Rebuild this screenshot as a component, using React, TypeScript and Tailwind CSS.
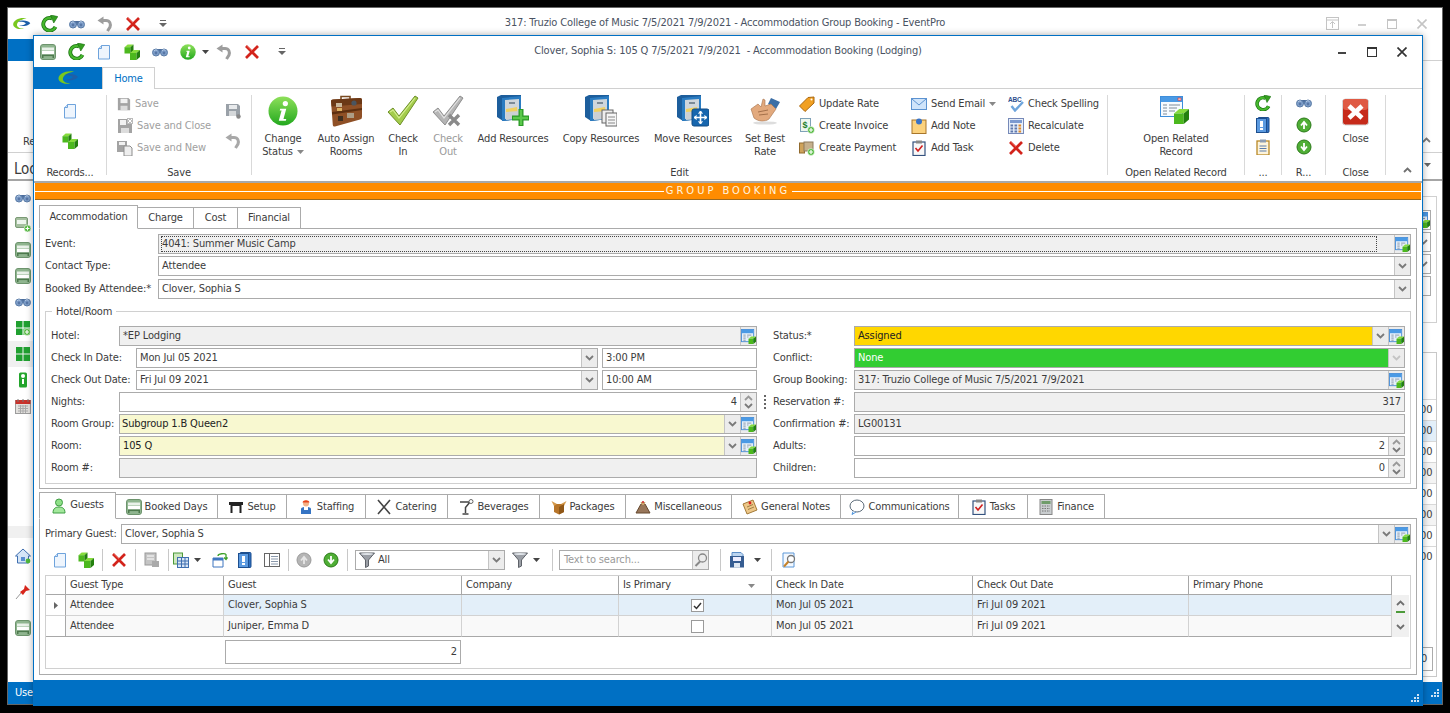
import React from "react";

type P = { s?: number; className?: string };
const Svg = ({ s = 16, v = 16, children, className }: { s?: number; v?: number; children: React.ReactNode; className?: string }) => (
  <svg width={s} height={s} viewBox={`0 0 ${v} ${v}`} className={`shrink-0 ${className ?? ""}`}>{children}</svg>
);

const Cube = ({ x, y, w, gray }: { x: number; y: number; w: number; gray?: boolean }) => (
  <g>
    <polygon points={`${x},${y + w * 0.3} ${x + w * 0.35},${y} ${x + w},${y} ${x + w * 0.65},${y + w * 0.3}`} fill={gray ? "#ccc" : "#86dc3c"} />
    <rect x={x} y={y + w * 0.3} width={w * 0.65} height={w * 0.7} fill={gray ? "#aaa" : "#4cb81e"} />
    <polygon points={`${x + w * 0.65},${y + w * 0.3} ${x + w},${y} ${x + w},${y + w * 0.7} ${x + w * 0.65},${y + w}`} fill={gray ? "#888" : "#23800e"} />
  </g>
);
const Cubes = ({ s = 16 }: P) => <Svg s={s}><Cube x={0.5} y={0.5} w={9} /><Cube x={6} y={6} w={10} /></Svg>;
const Doc = ({ s = 16 }: P) => <Svg s={s}><path d="M5.5 1.5H13.5V15H2.5V4.5Z" fill="#eef5fd" stroke="#6ea3dc" /><path d="M5.5 1.5V4.5H2.5" fill="#cfe2f7" stroke="#6ea3dc" /></Svg>;
const Refresh = ({ s = 17 }: P) => (
  <Svg s={s}>
    <path d="M13.6 11.2A6 6 0 1 1 10.5 3.2" fill="none" stroke="#17700f" strokeWidth="3.6" />
    <path d="M13.6 11.2A6 6 0 1 1 10.5 3.2" fill="none" stroke="#47b82e" strokeWidth="2.2" />
    <polygon points="9,0 15.8,1.5 12,7.5" fill="#35a020" stroke="#17700f" strokeWidth=".6" />
  </Svg>
);
const Binoc = ({ s = 16 }: P) => (
  <Svg s={s}>
    <rect x="5.5" y="5" width="5" height="4" fill="#4a6c9c" />
    <circle cx="4" cy="8.5" r="3.5" fill="#7f9fca" stroke="#5a7ba6" />
    <circle cx="12" cy="8.5" r="3.5" fill="#7f9fca" stroke="#5a7ba6" />
    <circle cx="4" cy="9" r="1.4" fill="#5877a6" />
    <circle cx="12" cy="9" r="1.4" fill="#5877a6" />
    <path d="M2 6.8A2.5 2.5 0 0 1 5 6.2M10 6.8A2.5 2.5 0 0 1 13.5 6.2" fill="none" stroke="#c2d3ea" strokeWidth=".8" />
  </Svg>
);
const Undo = ({ s = 16, c = "#9d9d9d" }: P & { c?: string }) => (
  <Svg s={s}>
    <path d="M5 4.5H9C13 4.5 14 8 13 11L10.5 15" fill="none" stroke={c} strokeWidth="3" />
    <polygon points="6.5,0.5 0.5,4.5 6.5,8.5" fill={c} />
  </Svg>
);
const RedX = ({ s = 16 }: P) => (
  <Svg s={s}>
    <path d="M2 2L14 14M14 2L2 14" stroke="#d3231b" strokeWidth="2.7" />
    <path d="M2.5 1.8L8 7" stroke="#f0665c" strokeWidth=".8" />
  </Svg>
);
const Caret = ({ c = "#444" }: { c?: string }) => <svg width="7" height="4" viewBox="0 0 7 4" className="shrink-0"><polygon points="0,0 7,0 3.5,4" fill={c} /></svg>;
const More = () => <svg width="8" height="7" viewBox="0 0 8 7" className="shrink-0"><rect x="1" width="6" height="1" fill="#666" /><polygon points="0,3 8,3 4,7" fill="#666" /></svg>;
const Chev = ({ c = "#7a7a7a", up }: { c?: string; up?: boolean }) => (
  <svg width="9" height="6" viewBox="0 0 9 6" className="shrink-0"><path d={up ? "M1 5L4.5 1.5L8 5" : "M1 1L4.5 4.5L8 1"} fill="none" stroke={c} strokeWidth="1.8" /></svg>
);
const Bed = ({ s = 16 }: P) => (
  <Svg s={s}>
    <rect x=".5" y=".5" width="15" height="15" rx="2.5" fill="#8fb58f" stroke="#6d946d" />
    <rect x="2" y="3.5" width="12" height="3" fill="#e9f1e9" />
    <rect x="2" y="7" width="12" height="3.5" fill="#fff" />
    <rect x="2" y="10.5" width="12" height="1.6" fill="#4d7a4d" />
    <rect x="2" y="12" width="1.5" height="2" fill="#4d7a4d" />
    <rect x="12.5" y="12" width="1.5" height="2" fill="#4d7a4d" />
  </Svg>
);
const Info = ({ s = 16 }: P) => (
  <svg width={s} height={s} viewBox="0 0 32 32" className="shrink-0">
    <defs><linearGradient id="ig" x1="0" y1="0" x2="0" y2="1"><stop offset="0" stopColor="#8ee05a" /><stop offset="1" stopColor="#22a81e" /></linearGradient></defs>
    <circle cx="16" cy="16" r="15.5" fill="url(#ig)" />
    <circle cx="18.5" cy="8" r="2.8" fill="#fff" />
    <path d="M13 13.5H19.5L16.5 24.5H19.5L19 26.5H11.5L14.5 15.5H12.5Z" fill="#fff" />
  </svg>
);
const Rec = ({ s = 16 }: P) => (
  <Svg s={s}>
    <rect x=".5" y=".5" width="13" height="13" fill="#e4effb" stroke="#4a90d9" />
    <rect x="1" y="1" width="12" height="3.5" fill="#4a9ae5" />
    <path d="M2.5 6.5H5M6.5 6.5H11M2.5 8.5H5M6.5 8.5H8M2.5 10.5H5M2.5 12.5H5" stroke="#8c99a8" />
    <Cube x={8} y={8} w={8} />
  </Svg>
);
const Floppy = ({ s = 16, c = "#a3a3a3" }: P & { c?: string }) => (
  <Svg s={s}>
    <path d="M1 1H13L15 3V15H1Z" fill={c} />
    <rect x="4" y="2" width="8" height="5" fill="#f1f1f1" />
    <rect x="4" y="10" width="8" height="5" fill="#dcdcdc" />
  </Svg>
);
const SaveClose = () => (
  <Svg>
    <path d="M1 1H15V15H1Z" fill="#a3a3a3" />
    <rect x="3" y="2" width="6" height="5" fill="#f1f1f1" />
    <rect x="4" y="10" width="8" height="5" fill="#dcdcdc" />
    <rect x="10" y="0" width="6" height="6" fill="#bbb" />
    <path d="M11 1L15 5M15 1L11 5" stroke="#fff" />
  </Svg>
);
const SaveNew = () => (
  <Svg>
    <path d="M0 1H10V12H0Z" fill="#a3a3a3" />
    <rect x="2" y="2" width="6" height="3" fill="#f1f1f1" />
    <path d="M7 6H13L15 8V16H7Z" fill="#eee" stroke="#8d8d8d" />
  </Svg>
);
const SaveAlt = () => (
  <Svg>
    <path d="M1 1H13L15 3V13H1Z" fill="#9aa1a8" />
    <rect x="4" y="2" width="8" height="4" fill="#e8eaec" />
    <rect x="4" y="8" width="7" height="5" fill="#d5d8da" />
    <circle cx="13.5" cy="13.5" r="2.2" fill="#888" />
  </Svg>
);
const Tag = () => <Svg><polygon points="0.5,10 9,1.5 15,1 15,7 6,15.5" fill="#f1a022" stroke="#a9670f" /><circle cx="12.5" cy="3.5" r="1" fill="#fff" /></Svg>;
const GreenPlus = ({ x = 9, y = 9 }: { x?: number; y?: number }) => (
  <g>
    <circle cx={x + 3} cy={y + 3} r="3.4" fill="#4fb83a" stroke="#fff" strokeWidth=".6" />
    <path d={`M${x + 1} ${y + 3}H${x + 5}M${x + 3} ${y + 1}V${y + 5}`} stroke="#fff" strokeWidth="1.2" />
  </g>
);
const Invoice = () => <Svg><rect x="1.5" y="0.5" width="10" height="13" fill="#eef7ee" stroke="#7fa2b8" /><text x="3.5" y="10" fontSize="9" fontWeight="700" fill="#1e7d2a" fontFamily="Liberation Sans">$</text><GreenPlus /></Svg>;
const Payment = () => <Svg><rect x="0.5" y="3" width="5" height="10" fill="#cfa35b" stroke="#916a2d" /><rect x="5" y="2" width="9" height="9" fill="#c6b08c" stroke="#8d7a5c" /><GreenPlus /></Svg>;
const Mail = () => <Svg><rect x=".5" y="2.5" width="15" height="11" fill="#cfe4fa" stroke="#5c93d1" /><path d="M1 3L8 9L15 3" fill="none" stroke="#5c93d1" /></Svg>;
const Note = () => <Svg><rect x="1" y="2" width="14" height="13.5" fill="#fbd27e" stroke="#a8762a" /><circle cx="8" cy="3.5" r="3" fill="#3973c6" /></Svg>;
const Clip = () => <Svg><rect x="2" y="2" width="12" height="13.5" fill="#f8f8f8" stroke="#34527f" strokeWidth="1.2" /><rect x="5" y="0.5" width="6" height="3" fill="#888" /><path d="M4.5 8L7 11L11.5 5.5" fill="none" stroke="#d11f1f" strokeWidth="1.6" /></Svg>;
const Spell = () => (
  <Svg>
    <text x="0" y="6" fontSize="6.5" fontWeight="700" fill="#2d4f8e" fontFamily="Liberation Sans">ABC</text>
    <path d="M3.5 10L7 14.5L15 6" fill="none" stroke="#6ea5dc" strokeWidth="2.4" />
  </Svg>
);
const Calc = () => (
  <Svg>
    <rect x=".5" y=".5" width="15" height="15" fill="#e7effa" stroke="#7689b8" />
    <rect x="2" y="2" width="12" height="3" fill="#7c9ad0" />
    {[7, 10, 13].map((y) => [2.5, 6.5, 10.5].map((x) => <rect key={`${x}${y}`} x={x} y={y - 0.5} width="2.6" height="2" fill={x > 10 ? "#e08a2a" : "#5f78ac"} />))}
  </Svg>
);
const Book = ({ s = 16 }: P) => (
  <Svg s={s}>
    <rect x="3" y=".5" width="11" height="15" rx="1" fill="#2d6fc0" stroke="#1d4f8f" />
    <rect x="1.5" y="1.5" width="10" height="14" fill="#5b9ae0" stroke="#1d4f8f" />
    <rect x="5" y="4" width="3" height="6" fill="#fff" />
    <rect x="5" y="11" width="3" height="2" fill="#fff" />
  </Svg>
);
const Clipboard = () => (
  <Svg>
    <rect x="2" y="2" width="12" height="14" fill="#fdf4dc" stroke="#b98925" strokeWidth="1.3" />
    <rect x="5" y="0.5" width="6" height="3" fill="#8e9db1" />
    <path d="M4.5 7H11.5M4.5 9.5H11.5M4.5 12H11.5" stroke="#5b7dad" />
  </Svg>
);
const Arrow = ({ up, gray }: { up?: boolean; gray?: boolean }) => (
  <Svg>
    <circle cx="8" cy="8" r="7" fill={gray ? "#b5b5b5" : "#4fae35"} stroke={gray ? "#9a9a9a" : "#2a7a18"} />
    <path d={up ? "M8 12V6.5M5 8.5L8 5L11 8.5" : "M8 4V9.5M5 7.5L8 11L11 7.5"} fill="none" stroke={gray ? "#e6e6e6" : "#fff"} strokeWidth="1.8" />
  </Svg>
);
const Funnel = () => (
  <Svg>
    <path d="M.5 1H15.5L9.5 8V14L6.5 15.5V8Z" fill="#9b9fa6" stroke="#5e6269" />
    <ellipse cx="8" cy="2" rx="6" ry="1" fill="#dfe3e8" />
  </Svg>
);
const Mag = ({ c = "#888" }: { c?: string }) => <Svg><circle cx="9.5" cy="6" r="4" fill="none" stroke={c} strokeWidth="1.3" /><path d="M7 9.5L2.5 14" stroke={c} strokeWidth="2" /></Svg>;

/* ---- 32px icons ---- */
const Suitcase = () => (
  <Svg s={32} v={32}>
    <path d="M11 5V1.5H20V5" fill="none" stroke="#7a4a20" strokeWidth="1.6" />
    <path d="M1 6Q1 4.5 3 4.5L30 3Q32 3 32 5V22Q32 24 30 24.5L5 31.5Q3 32 2.8 30Z" fill="#8f5026" />
    <path d="M1 6Q1 4.5 3 4.5L30 3Q32 3 32 5V9L1.6 11.5Z" fill="#6b3816" />
    <path d="M2 17L32 13V15L2.2 19.5Z" fill="#5d2f10" />
    <rect x="6" y="8" width="6" height="4" fill="#c9b79b" />
    <rect x="17" y="18" width="7" height="5" fill="#ad9d86" />
    <circle cx="24" cy="8" r="2.6" fill="#4a5560" />
    <rect x="8" y="21" width="5" height="5" fill="#3f2f20" />
    <rect x="7" y="13" width="5" height="3" fill="#dcb062" />
  </Svg>
);
const Check = ({ gray }: { gray?: boolean }) => (
  <Svg s={32} v={32}>
    <path d="M1 17L6 13L12 21L28 1L31 3L13 30Z" fill={gray ? "#b5b5b5" : "#a4cc4c"} stroke={gray ? "#8e8e8e" : "#6d8f28"} />
    <path d="M3 17L6 15L12 23L28 3" fill="none" stroke={gray ? "#e2e2e2" : "#d5ee90"} strokeWidth="1.2" />
    {gray && <path d="M17 20L27 30M27 20L17 30" stroke="#8a8a8a" strokeWidth="3.4" />}
  </Svg>
);
const Cabinet = ({ kind }: { kind: "add" | "copy" | "move" }) => (
  <Svg s={32} v={32}>
    <polygon points="0,2 4,0 24,0 24,24 6,26 0,22" fill="#1d5e9c" />
    <polygon points="5,3 24,1 24,24 5,26" fill="#2a7cc2" />
    <polygon points="8,5 22,4 22,22 8,24" fill="#cfd6dc" />
    <rect x="12" y="7" width="6" height="2" fill="#7c8a96" />
    <polygon points="9,14 20,12 21,22 9,24" fill="#f0d060" />
    <polygon points="9,17 22,16 22,24 9,25" fill="#ccd0d4" />
    {kind === "add" && <path d="M24 14V31M15 23H32" stroke="#2b9a26" strokeWidth="5" />}
    {kind === "add" && <path d="M24 15V30M16 23H31" stroke="#5ac84a" strokeWidth="2.4" />}
    {kind === "copy" && <g><rect x="17" y="15" width="11" height="13" fill="#eee" stroke="#666" /><rect x="21" y="18" width="11" height="13" fill="#f6f6f6" stroke="#666" /><path d="M23 22H30M23 25H30M23 28H30" stroke="#888" /></g>}
    {kind === "move" && <g><rect x="15" y="14" width="17" height="17" rx="2" fill="#1766ae" stroke="#0f4b85" /><path d="M23.5 16.5V28.5M17.5 22.5H29.5" stroke="#fff" strokeWidth="1.6" /><path d="M21.5 18.5L23.5 16L25.5 18.5M21.5 26.5L23.5 29L25.5 26.5M19.5 20.5L17 22.5L19.5 24.5M27.5 20.5L30 22.5L27.5 24.5" fill="#fff" stroke="#fff" /></g>}
  </Svg>
);
const Hand = () => (
  <Svg s={32} v={32}>
    <path d="M22 3L31 7L27 14L19 9Z" fill="#3b6ea5" />
    <path d="M2 14L9 9L12 12L14 4L16 5V11L22 9L27 14L20 24C16 27 10 27 5 23Z" fill="#e2a97d" stroke="#a4704a" strokeWidth=".6" />
    <path d="M9 17L19 15M10 20L19 19" stroke="#a4704a" />
    <ellipse cx="16" cy="28" rx="12" ry="1.6" fill="#ddd" />
  </Svg>
);
const OpenRec = () => (
  <Svg s={32} v={32}>
    <rect x=".5" y="1.5" width="22" height="20" fill="#f7fbff" stroke="#3e8edb" />
    <rect x="1" y="2" width="21" height="5" fill="#4a9ae5" />
    <rect x="18" y="3" width="3" height="2.5" fill="#f3c0c0" stroke="#d22" strokeWidth=".5" />
    <path d="M3 10H7M9 10H20M3 13H7M9 13H17M3 16H7M9 16H15M3 19H7" stroke="#7e8b99" />
    <Cube x={14} y={14} w={15} />
  </Svg>
);
const CloseBig = () => (
  <Svg s={32} v={32}>
    <rect x="2.5" y="4" width="26" height="26" rx="3" fill="#c62a1a" stroke="#d6d6d6" />
    <rect x="3" y="4" width="25" height="11" rx="3" fill="#df5a44" />
    <path d="M9 11L22 23M22 11L9 23" stroke="#fff" strokeWidth="4.5" />
  </Svg>
);
const Logo = ({ s = 16 }: P) => (
  <svg width={s * 1.5} height={s} viewBox="0 0 24 16" className="shrink-0">
    <path d="M18 1.5C10 0 3 3.5 2.5 8C2 12 9 15.5 15 13C10 14 6 11 7 8C8 4.5 13 2.5 18 1.5Z" fill="#78c81e" />
    <path d="M8 5.5C12 3 20 4 22 7C20 10 14 11 9 10C13 9.5 16 8.5 17 7C15 5.5 11 5 8 5.5Z" fill="#1e5fa8" />
  </svg>
);

/* tab icons */
const TGuest = () => <Svg><circle cx="8" cy="4.5" r="3.5" fill="#8fe088" stroke="#3f9e44" /><path d="M2 15C2 10 5 9 8 9S14 10 14 15Z" fill="#a3e89c" stroke="#3f9e44" /></Svg>;
const TSetup = () => <Svg><path d="M1 3H15V6H13.5V14H11.5V7H4.5V14H2.5V6H1Z" fill="#222" /></Svg>;
const TStaff = () => <Svg><circle cx="8" cy="4.5" r="3" fill="#f2b38a" /><path d="M4.5 3.5C5 .5 11 .5 11.5 3.5Z" fill="#e5451d" /><path d="M3 15V10C3 8.5 5 8 8 8S13 8.5 13 10V15Z" fill="#3574c4" /><rect x="6" y="8" width="4" height="3" fill="#fff" /></Svg>;
const TCater = () => <Svg><path d="M2 1L14 15M14 1L2 15" stroke="#444" strokeWidth="1.6" /></Svg>;
const TBev = () => <Svg><path d="M2 3H12L7.5 8.5V14M4.5 15H10.5" fill="none" stroke="#444" strokeWidth="1.5" /><circle cx="13" cy="2.5" r="2" fill="#fff" stroke="#666" /></Svg>;
const TPack = () => <Svg><polygon points="3,5 13,5 13,13 8,15.5 3,13" fill="#b7752a" /><polygon points="0.5,2 6,5 3,7" fill="#d59a4c" /><polygon points="15.5,2 10,5 13,7" fill="#d59a4c" /><polygon points="8,8 13,5 13,13 8,15.5" fill="#8f5718" /></Svg>;
const TMisc = () => <Svg><path d="M6 5H10L15 14H1Z" fill="#98765a" stroke="#65482f" /><path d="M5.5 3H10.5L9 6H7Z" fill="#c9a06a" /><circle cx="8" cy="3" r="1.1" fill="#c33" /></Svg>;
const TNotes = () => <Svg><polygon points="1,5 11,1 15,11 5,15" fill="#edc788" stroke="#a37a38" /><path d="M5 8L11 5.5M6 10.5L12 8" stroke="#9f7e45" /><circle cx="8" cy="4" r="1.4" fill="#d22" /></Svg>;
const TComm = () => <Svg><ellipse cx="8" cy="7" rx="7" ry="6" fill="#fff" stroke="#5b6a78" /><path d="M4 12.5L3 15.5L7 13" fill="#fff" stroke="#4a90d9" /></Svg>;
const TFin = () => <Svg><rect x="2" y="0.5" width="12" height="15" fill="#c9cdcf" stroke="#888" /><rect x="3.5" y="2" width="9" height="3" fill="#6f9c6a" /><path d="M4 7H12M4 9.5H12M4 12H12" stroke="#777" strokeDasharray="1.5 1" /></Svg>;
const TGrid = () => <Svg><rect x=".5" y="1" width="9" height="11" fill="#cfe8c0" stroke="#4d9a3a" /><rect x="4.5" y="5.5" width="11" height="10" fill="#d9e6f6" stroke="#3f6fb0" /><path d="M5 9H15M5 12H15M8.5 6V15M12 6V15" stroke="#3f6fb0" /></Svg>;
const TDis = () => <Svg><rect x="1" y="1" width="11" height="12" fill="#c4c4c4" stroke="#999" /><path d="M3 4H10M3 7H10" stroke="#fff" /><rect x="8" y="9" width="7" height="6" fill="#aaa" /></Svg>;
const TOpen = () => <Svg><path d="M1 6H11V15H1Z" fill="#fff" stroke="#3f77c0" /><rect x="1" y="6" width="10" height="2.5" fill="#3f77c0" /><path d="M6 4C6 1.5 13 1 14 2.5V7M12 5.5L14 7.5L15.5 5.5" fill="none" stroke="#3da12a" strokeWidth="1.3" /></Svg>;
const TPanel = () => <Svg><rect x=".5" y="1.5" width="15" height="13" fill="#fff" stroke="#666" /><path d="M5.5 2V14" stroke="#666" /><path d="M7 4.5H14M7 7H14M7 9.5H14M7 12H14" stroke="#8a99ac" /></Svg>;
const TSave = () => <Svg><path d="M3 0.5H12L14 2.5V6H3Z" fill="#bcd5f0" stroke="#5c8ec8" /><path d="M1 4H15V15.5H1Z" fill="#365d92" /><rect x="4" y="5" width="8" height="4" fill="#eef" /><rect x="5" y="11" width="6" height="4.5" fill="#dfe8f2" /></Svg>;
const TMag = () => <Svg><path d="M2 1H13V15H2Z" fill="#f4f9ff" stroke="#5c98d8" /><circle cx="10" cy="7" r="3.5" fill="#fff" stroke="#777" strokeWidth="1.3" /><path d="M7.5 9.5L3 14.5" stroke="#c6822a" strokeWidth="2" /></Svg>;
const PinH = () => <Svg><path d="M10 1L15 6L11 7L8 11L5 8L9 5Z" fill="#d8261c" /><path d="M6 9L1 15" stroke="#999" /></Svg>;
const House = () => <Svg><path d="M8 1L15.5 8H13.5V15H2.5V8H.5Z" fill="#d6e6f7" stroke="#3f6fb0" /><rect x="6" y="9" width="4" height="4" fill="#5b8fd0" /><circle cx="13" cy="13" r="2.4" fill="#4fb83a" /></Svg>;
const GridG = ({ plus }: { plus?: boolean }) => <Svg><rect x="1" y="1" width="6.5" height="6.5" fill="#20a030" /><rect x="8.5" y="1" width="6.5" height="6.5" fill="#20a030" /><rect x="1" y="8.5" width="6.5" height="6.5" fill="#20a030" /><rect x="8.5" y="8.5" width="6.5" height="6.5" fill="#20a030" />{plus && <GreenPlus />}</Svg>;
const Traffic = () => <Svg><rect x="4" y="0.5" width="8" height="15" rx="1.5" fill="#23a52c" /><circle cx="8" cy="4" r="2" fill="#fff" /><path d="M8 7V12" stroke="#fff" strokeWidth="2" /></Svg>;
const CalIcon = () => <Svg><rect x=".5" y="2.5" width="15" height="13" fill="#e3e1de" stroke="#9c9c9c" /><rect x=".5" y="2" width="15" height="4" fill="#c9322b" /><path d="M3 1V4M8 1V4M13 1V4" stroke="#777" /><path d="M3 8H13M3 10.5H13M3 13H13M5.5 7V15M8 7V15M10.5 7V15" stroke="#a9a9a9" /></Svg>;
const BedAdd = () => <Svg><rect x=".5" y="1.5" width="12" height="10" rx="1.5" fill="#a5bf9f" stroke="#7a9a75" /><rect x="2" y="4" width="9" height="4" fill="#eef5ee" /><GreenPlus x={9.5} y={9.5} /></Svg>;

/* ---- primitives ---- */
const Box = ({ w, children }: { w: number; children: React.ReactNode }) => (
  <div style={{ width: w }} className="flex shrink-0 items-center justify-center gap-[5px]">{children}</div>
);
const VSep = () => <div className="mx-0 h-[22px] w-px shrink-0 bg-[#c8c8c8]" />;
const RSep = () => <div className="my-[6px] w-px shrink-0 bg-[#d9d9d9]" />;

const Group = ({ w, label, children, className }: { w: number; label: string; children: React.ReactNode; className?: string }) => (
  <div style={{ width: w }} className="flex shrink-0 flex-col">
    <div className={`flex min-h-0 flex-1 ${className ?? ""}`}>{children}</div>
    <div className="mb-px h-[14px] text-center leading-[14px] whitespace-nowrap">{label}</div>
  </div>
);
const Large = ({ w, icon, l1, l2, caret, off }: { w: number; icon: React.ReactNode; l1: string; l2?: string; caret?: boolean; off?: boolean }) => (
  <div style={{ width: w }} className={`flex shrink-0 flex-col items-center pt-[6px] ${off ? "text-[#9a9a9a]" : ""}`}>
    <div className="flex h-[32px] w-[32px] items-center justify-center">{icon}</div>
    <div className="mt-[5px] text-center leading-[13px] whitespace-nowrap">{l1}</div>
    {l2 && <div className="flex items-center gap-[4px] text-center leading-[13px] whitespace-nowrap">{l2}{caret && <Caret c="#888" />}</div>}
  </div>
);
const Small = ({ icon, text, off, caret }: { icon: React.ReactNode; text: string; off?: boolean; caret?: boolean }) => (
  <div className={`flex h-[22px] items-center gap-[4px] whitespace-nowrap ${off ? "text-[#a0a0a0]" : ""}`}>
    {icon}<span className="pt-px">{text}</span>{caret && <Caret c="#888" />}
  </div>
);
const SmallCol = ({ items, className }: { items: React.ReactNode; className?: string }) => <div className={`flex flex-col pt-[4px] ${className ?? ""}`}>{items}</div>;

type Btn = "chev" | "rec" | "spin" | "chevOff";
const Field = ({ children, bg = "bg-white", btn = [], right, pl = "pl-[3px]", focus, fg, w }: { children?: React.ReactNode; bg?: string; btn?: Btn[]; right?: boolean; pl?: string; focus?: boolean; fg?: string; w?: string }) => (
  <div className={`flex h-[20px] ${w ?? "min-w-0 flex-1"} border border-[#ababab] bg-white`}>
    <div className={`flex min-w-0 flex-1 items-center ${bg} ${fg ?? ""} ${right ? "justify-end pr-[3px]" : pl} whitespace-nowrap`}>
      {focus ? <div className="mr-[17px] flex h-[16px] w-[1216px] items-center border border-dotted border-[#444] pt-px">{children}</div> : <span className="pt-px">{children}</span>}
    </div>
    {btn.map((b, i) => (
      <div key={i} className="flex w-[16px] shrink-0 flex-col items-center justify-center border-l border-[#c4c4c4] bg-[#ececec]">
        {b === "chev" && <Chev />}
        {b === "chevOff" && <Chev c="#c4c4c4" />}
        {b === "rec" && <Rec s={15} />}
        {b === "spin" && <div className="flex flex-col items-center gap-[2px]"><Chev up c="#999" /><Chev /></div>}
      </div>
    ))}
  </div>
);
const Row = ({ label, lw, children }: { label: string; lw: number; children: React.ReactNode }) => (
  <div className="flex h-[20px] items-center">
    <div style={{ width: lw }} className="shrink-0 pt-px whitespace-nowrap">{label}</div>
    {children}
  </div>
);
const TabS = ({ w, active, icon, h, nudge, children }: { w: number; active?: boolean; icon?: React.ReactNode; h: number; nudge?: boolean; children: React.ReactNode }) => (
  <div style={{ width: w, height: active ? h + 2 : h }} className={`-ml-px flex shrink-0 items-center justify-center gap-[3px] border border-[#ababab] bg-white whitespace-nowrap first:ml-0 ${active ? "relative z-10 border-b-white" : ""}`}>
    {icon}<span className={nudge ? "pt-px" : ""}>{children}</span>
  </div>
);

const topL = ["Event:", "Contact Type:", "Booked By Attendee:*"];
const cols = "grid-cols-[20px_158px_238px_157px_153px_201px_216px_203px_17px]";
const Cell = ({ children, bg, className }: { children?: React.ReactNode; bg: string; className?: string }) => (
  <div className={`flex h-[21px] items-center border-r border-b border-[#d2d2d2] pt-px pl-[4px] whitespace-nowrap ${bg} ${className ?? ""}`}>{children}</div>
);
const Head = ({ children, className }: { children?: React.ReactNode; className?: string }) => (
  <div className={`flex h-[19px] items-center border-r border-b border-[#a8a8a8] pt-px pl-[4px] whitespace-nowrap ${className ?? ""}`}>{children}</div>
);

const rail = [<Binoc key="a" />, <BedAdd key="b" />, <Bed key="c" />, <Bed key="d" />, <Binoc key="e" />, <GridG plus key="f" />, <GridG key="g" />, <Traffic key="h" />, <CalIcon key="i" />];

export default function App() {
  return (
    <div className="relative h-[713px] w-[1450px] overflow-hidden bg-black font-['DejaVu_Sans_Condensed','Liberation_Sans',sans-serif] text-[11px] tracking-[-0.15px] text-[#3c3c3c]">
      {/* background window */}
      <div className="absolute top-[7px] left-[7px] flex h-[698px] w-[1436px] flex-col border border-[#666] bg-white">
        <div className="grid h-[31px] shrink-0 grid-cols-[1fr_auto_1fr] items-center">
          <div className="-ml-px flex items-center">
            <Box w={28}><Logo s={14} /></Box>
            <Box w={28}><Refresh /></Box><Box w={28}><Binoc /></Box><Box w={28}><Undo /></Box><Box w={28}><RedX /></Box>
            <Box w={32}><More /></Box>
          </div>
          <div className="text-[#4a5262]">317: Truzio College of Music 7/5/2021 7/9/2021 - Accommodation Group Booking - EventPro</div>
          <div className="flex items-center justify-end pr-[5px] text-[#c8c8c8]">
            <Box w={30}><svg width="13" height="13" viewBox="0 0 13 13"><rect x=".5" y=".5" width="12" height="12" fill="none" stroke="#c4c4c4" /><path d="M0 3H13M6.5 11V5M4 7L6.5 4.5L9 7" fill="none" stroke="#c4c4c4" /></svg></Box>
            <Box w={30}><div className="mt-[3px] h-[2px] w-[8px] bg-[#cfcfcf]" /></Box>
            <Box w={30}><div className="h-[10px] w-[10px] border border-t-2 border-[#c4c4c4]" /></Box>
            <Box w={30}><svg width="10" height="10" viewBox="0 0 10 10"><path d="M.5.5L9.5 9.5M9.5.5L.5 9.5" stroke="#c4c4c4" strokeWidth="1.6" /></svg></Box>
          </div>
        </div>
        <div className="flex h-[22px] shrink-0 border-b border-[#d0d0d0]"><div className="flex h-[22px] w-[68px] items-center justify-center bg-[#0070c4]" /></div>
        <div className="flex h-[92px] shrink-0 items-end justify-between border-b border-[#d0d0d0]">
          <div className="mb-[2px] ml-[15px]">Re</div>
          <div className="mr-[11px] mb-[9px]"><Chev up c="#7a7a7a" /></div>
        </div>
        <div className="flex h-[28px] shrink-0 justify-between border-b-2 border-[#a5a5a5]">
          <div className="mt-[7px] ml-[6px] text-[15px] leading-[18px]">Loc</div>
          <div className="mt-[10px] mr-[11px]"><Caret c="#666" /></div>
        </div>
        <div className="flex min-h-0 flex-1 justify-between">
          <div className="flex w-[25px] flex-col">
            <div className="h-[4px]" />
            {rail.map((ic, i) => (
              <div key={i} className={`flex h-[26px] w-[25px] items-center justify-center pl-[5px] ${i === 6 ? "bg-[#f0f0f0]" : ""}`}>{ic}</div>
            ))}
            <div className="mt-[107px] h-[12px] bg-[#f0f0f0]" />
            <div className="mt-[10px] flex h-[16px] justify-center pl-[5px]"><House /></div>
            <div className="mt-[20px] flex h-[16px] justify-center pl-[5px]"><PinH /></div>
            <div className="mt-[20px] flex h-[16px] justify-center pl-[5px]"><Bed /></div>
          </div>
          <div className="mr-[5px] flex w-[14px] flex-col">
            <div className="mt-[15px] flex h-[127px] flex-col gap-[2px] border-y border-r border-[#d0d0d0] pt-[13px]">
              <div className="flex h-[20px] w-[8px] items-center overflow-hidden border-y border-r border-[#ababab]"><div className="-ml-[9px]"><Rec /></div></div>
              <div className="flex h-[20px] w-[8px] items-center overflow-hidden border-y border-r border-[#ababab]"><div className="-ml-[4px]"><Chev /></div></div>
              <div className="flex h-[20px] w-[8px] items-center overflow-hidden border-y border-r border-[#ababab]"><div className="-ml-[4px]"><Chev /></div></div>
              <div className="h-[20px] w-[8px] border-y border-r border-[#ababab]" />
            </div>
            <div className="mt-[29px] flex h-[325px] flex-col border-y border-r border-[#c8c8c8] pt-[46px]">
              {["bg-white", "bg-[#e3eff9]", "bg-white", "bg-[#f4f4f4]", "bg-white", "bg-[#f4f4f4]", "bg-white", "bg-white"].map((b, i) => (
                <div key={i} className={`flex h-[21px] items-center overflow-hidden border-t border-[#d8d8d8] ${b}`}><span className="-ml-[3px]">00</span></div>
              ))}
              <div className="mt-[80px] flex h-[24px] w-[10px] items-center overflow-hidden border-y border-r border-[#ababab]"><span className="-ml-[2px]">0</span></div>
            </div>
          </div>
        </div>
        <div className="flex h-[22px] shrink-0 items-center justify-between bg-[#0070c4] pr-[2px] pl-[7px] text-white">
          <span>Use</span>
          <Grip />
        </div>
      </div>

      {/* foreground window */}
      <div className="absolute top-[35px] left-[33px] flex h-[671px] w-[1390px] flex-col border border-[#0070c4] bg-white shadow-[0_0_7px_rgba(0,0,0,0.35)]">
        <div className="grid h-[31px] shrink-0 grid-cols-[1fr_auto_1fr] items-center">
          <div className="flex items-center">
            <Box w={28}><Bed /></Box><Box w={28}><Refresh /></Box><Box w={28}><Doc /></Box><Box w={28}><Cubes /></Box><Box w={28}><Binoc /></Box>
            <div className="ml-[6px] flex w-[30px] items-center gap-[6px]"><Info /><Caret /></div>
            <Box w={28}><Undo /></Box><Box w={28}><RedX /></Box><Box w={32}><More /></Box>
          </div>
          <div className="text-[#4a5262]">Clover, Sophia S: 105 Q 7/5/2021 7/9/2021&nbsp; - Accommodation Booking (Lodging)</div>
          <div className="flex items-center justify-end pr-[5px]">
            <Box w={30}><div className="mt-[3px] h-[2px] w-[8px] bg-[#444]" /></Box>
            <Box w={30}><div className="h-[10px] w-[10px] border border-t-2 border-[#333]" /></Box>
            <Box w={30}><svg width="10" height="10" viewBox="0 0 10 10"><path d="M.5.5L9.5 9.5M9.5.5L.5 9.5" stroke="#333" strokeWidth="1.7" /></svg></Box>
          </div>
        </div>
        <div className="flex h-[22px] shrink-0 border-b border-[#d0d0d0]">
          <div className="flex h-[22px] w-[68px] items-center justify-center bg-[#0070c4]"><Logo s={16} /></div>
          <div className="flex h-[22px] w-[53px] items-center justify-center border-x border-t border-[#d0d0d0] bg-white pt-[2px] text-[#0070c4]">Home</div>
        </div>
        {/* ribbon */}
        <div className="relative flex h-[92px] shrink-0">
          <Group w={72} label="Records...">
            <div className="flex w-full flex-col items-center gap-[14px] pt-[14px]"><Doc /><Cubes /></div>
          </Group>
          <RSep />
          <Group w={144} label="Save" className="justify-between">
            <SmallCol className="pl-[10px]" items={<>
              <Small off icon={<Floppy s={14} />} text="Save" />
              <Small off icon={<SaveClose />} text="Save and Close" />
              <Small off icon={<SaveNew />} text="Save and New" />
            </>} />
            <div className="flex flex-col items-center gap-[14px] pt-[14px] pr-[10px]"><SaveAlt /><Undo c="#a8a8a8" /></div>
          </Group>
          <RSep />
          <Group w={855} label="Edit">
            <Large w={62} icon={<Info s={30} />} l1="Change" l2="Status" caret />
            <Large w={64} icon={<Suitcase />} l1="Auto Assign" l2="Rooms" />
            <Large w={50} icon={<Check />} l1="Check" l2="In" />
            <Large w={40} off icon={<Check gray />} l1="Check" l2="Out" />
            <Large w={90} icon={<Cabinet kind="add" />} l1="Add Resources" />
            <Large w={86} icon={<Cabinet kind="copy" />} l1="Copy Resources" />
            <Large w={98} icon={<Cabinet kind="move" />} l1="Move Resources" />
            <Large w={46} icon={<Hand />} l1="Set Best" l2="Rate" />
            <SmallCol className="ml-[11px] w-[112px]" items={<>
              <Small icon={<Tag />} text="Update Rate" />
              <Small icon={<Invoice />} text="Create Invoice" />
              <Small icon={<Payment />} text="Create Payment" />
            </>} />
            <SmallCol className="w-[97px]" items={<>
              <Small icon={<Mail />} text="Send Email" caret />
              <Small icon={<Note />} text="Add Note" />
              <Small icon={<Clip />} text="Add Task" />
            </>} />
            <SmallCol items={<>
              <Small icon={<Spell />} text="Check Spelling" />
              <Small icon={<Calc />} text="Recalculate" />
              <Small icon={<RedX />} text="Delete" />
            </>} />
          </Group>
          <RSep />
          <Group w={136} label="Open Related Record">
            <Large w={136} icon={<OpenRec />} l1="Open Related" l2="Record" />
          </Group>
          <RSep />
          <Group w={36} label="...">
            <div className="flex w-full flex-col items-center gap-[6px] pt-[6px]"><Refresh s={16} /><Book /><Clipboard /></div>
          </Group>
          <RSep />
          <Group w={43} label="R...">
            <div className="flex w-full flex-col items-center gap-[6px] pt-[6px]"><Binoc /><Arrow up /><Arrow /></div>
          </Group>
          <RSep />
          <Group w={59} label="Close">
            <Large w={59} icon={<CloseBig />} l1="Close" />
          </Group>
          <RSep />
          <div className="ml-auto flex items-end pr-[10px] pb-[8px]"><Chev up c="#707070" /></div>
        </div>
        <div className="h-[2px] shrink-0 bg-[#a9a9a9]" />
        {/* orange band */}
        <div className="relative mx-px flex h-[17px] shrink-0 items-center justify-center border-b border-[#9c6a20] bg-[#ff8c00]">
          <div className="absolute inset-x-0 top-[8px] h-px bg-white" />
          <div className="relative bg-[#ff8c00] px-[2px] text-[11px] leading-[14px] tracking-[3px] text-[#fff5e0]">GROUP BOOKING</div>
        </div>
        {/* main tabs */}
        <div className="mx-[5px] mt-[5px] flex h-[24px] shrink-0 items-end">
          <TabS h={22} w={99} active nudge>Accommodation</TabS>
          <TabS h={22} w={57} nudge>Charge</TabS>
          <TabS h={22} w={45} nudge>Cost</TabS>
          <TabS h={22} w={64} nudge>Financial</TabS>
        </div>
        <div className="mx-[5px] -mt-px flex h-[261px] shrink-0 flex-col border border-[#ababab] px-[5px] pt-[5px]">
          <div className="flex flex-col gap-[2px]">
            <Row label={topL[0]} lw={113}><Field bg="bg-[#f0f0f0]" pl="pl-[2px]" btn={["rec"]} focus>4041: Summer Music Camp</Field></Row>
            <Row label={topL[1]} lw={113}><Field btn={["chev"]}>Attendee</Field></Row>
            <div className="mt-px"><Row label={topL[2]} lw={113}><Field btn={["chev"]}>Clover, Sophia S</Field></Row></div>
          </div>
          <div className="relative mt-[12px] flex h-[173px] gap-[16px] border border-[#d0d0d0] px-[5px] pt-[14px]">
            <div className="absolute -top-[7px] left-[6px] bg-white px-[4px] leading-[14px]">Hotel/Room</div>
            <div className="flex w-[706px] flex-col gap-[2px]">
              <Row label="Hotel:" lw={68}><Field bg="bg-[#f0f0f0]" btn={["rec"]}>*EP Lodging</Field></Row>
              <Row label="Check In Date:" lw={85}><div className="flex flex-1 gap-[4px]"><Field btn={["chev"]}>Mon Jul 05 2021</Field><Field w="w-[155px] shrink-0">3:00 PM</Field></div></Row>
              <Row label="Check Out Date:" lw={85}><div className="flex flex-1 gap-[4px]"><Field btn={["chev"]}>Fri Jul 09 2021</Field><Field w="w-[155px] shrink-0">10:00 AM</Field></div></Row>
              <Row label="Nights:" lw={68}><Field right btn={["spin"]}>4</Field></Row>
              <Row label="Room Group:" lw={68}><Field bg="bg-[#f8f8d0]" pl="pl-[2px]" btn={["chev", "rec"]} fg="text-[#222]">Subgroup 1.B Queen2</Field></Row>
              <Row label="Room:" lw={68}><Field bg="bg-[#f8f8d0]" pl="pl-[3px]" btn={["chev", "rec"]} fg="text-[#222]">105 Q</Field></Row>
              <Row label="Room #:" lw={68}><Field bg="bg-[#f0f0f0]" /></Row>
            </div>
            <div className="relative flex w-[632px] flex-col gap-[2px]">
              <div className="absolute top-[69px] -left-[9px] flex flex-col gap-[2px]">
                {[0, 1, 2, 3].map((i) => <div key={i} className="h-[2px] w-[2px] bg-[#666]" />)}
              </div>
              <Row label="Status:*" lw={81}><Field bg="bg-[#ffd700]" btn={["chev", "rec"]} fg="text-[#222]">Assigned</Field></Row>
              <Row label="Conflict:" lw={81}><Field bg="bg-[#32cd32]" btn={["chevOff"]} fg="text-white">None</Field></Row>
              <Row label="Group Booking:" lw={81}><Field bg="bg-[#f0f0f0]" btn={["rec"]}>317: Truzio College of Music 7/5/2021 7/9/2021</Field></Row>
              <Row label="Reservation #:" lw={81}><Field bg="bg-[#f0f0f0]" right>317</Field></Row>
              <Row label="Confirmation #:" lw={81}><Field bg="bg-[#f0f0f0]">LG00131</Field></Row>
              <Row label="Adults:" lw={81}><Field right btn={["spin"]}>2</Field></Row>
              <Row label="Children:" lw={81}><Field right btn={["spin"]}>0</Field></Row>
            </div>
          </div>
        </div>
        {/* lower tabs */}
        <div className="mx-[5px] mt-[3px] flex h-[27px] shrink-0 items-end">
          <TabS h={25} w={77} active icon={<TGuest />}>Guests</TabS>
          <TabS h={25} w={103} nudge icon={<Bed />}>Booked Days</TabS>
          <TabS h={25} w={70} nudge icon={<TSetup />}>Setup</TabS>
          <TabS h={25} w={80} nudge icon={<TStaff />}>Staffing</TabS>
          <TabS h={25} w={83} nudge icon={<TCater />}>Catering</TabS>
          <TabS h={25} w={93} nudge icon={<TBev />}>Beverages</TabS>
          <TabS h={25} w={87} nudge icon={<TPack />}>Packages</TabS>
          <TabS h={25} w={107} nudge icon={<TMisc />}>Miscellaneous</TabS>
          <TabS h={25} w={110} nudge icon={<TNotes />}>General Notes</TabS>
          <TabS h={25} w={119} nudge icon={<TComm />}>Communications</TabS>
          <TabS h={25} w={70} nudge icon={<Clip />}>Tasks</TabS>
          <TabS h={25} w={78} nudge icon={<TFin />}>Finance</TabS>
        </div>
        <div className="mx-[5px] -mt-px flex h-[157px] shrink-0 flex-col border border-[#ababab] px-[5px] pt-[5px]">
          <Row label="Primary Guest:" lw={76}><Field btn={["chev", "rec"]}>Clover, Sophia S</Field></Row>
          <div className="mt-[5px] flex h-[22px] items-center">
            <Box w={30}><Doc /></Box><Box w={22}><Cubes /></Box><div className="w-[5px]" /><VSep />
            <Box w={32}><RedX /></Box><VSep />
            <Box w={32}><TDis /></Box><VSep />
            <Box w={36}><TGrid /><Caret /></Box>
            <Box w={30}><TOpen /></Box>
            <Box w={20}><Book /></Box>
            <Box w={33}><TPanel /></Box><VSep />
            <Box w={30}><Arrow up gray /></Box>
            <Box w={24}><Arrow /></Box><div className="w-[4px]" /><VSep />
            <div className="ml-[7px] flex h-[20px] w-[150px] shrink-0 items-center border border-[#ababab] pl-[3px]">
              <Funnel /><span className="ml-[3px] flex-1 pt-px">All</span>
              <div className="flex h-full w-[16px] items-center justify-center border-l border-[#c4c4c4] bg-[#ececec]"><Chev /></div>
            </div>
            <Box w={42}><Funnel /><Caret /></Box><div className="w-[5px]" /><VSep />
            <div className="ml-[6px] flex h-[20px] w-[150px] shrink-0 items-center border border-[#ababab] pl-[4px] text-[#9a9a9a]">
              <span className="flex-1 pt-px">Text to search...</span>
              <div className="flex h-full w-[16px] items-center justify-center border-l border-[#c4c4c4] bg-[#ececec]"><Mag /></div>
            </div>
            <div className="w-[11px]" /><VSep />
            <Box w={31}><TSave /></Box>
            <Box w={11}><Caret /></Box><div className="w-[8px]" /><VSep />
            <Box w={33}><TMag /></Box>
          </div>
          <div className="mt-[4px] h-[94px] border border-[#d0d0d0]">
            <div className={`grid ${cols}`}>
              <Head />
              <Head>Guest Type</Head>
              <Head>Guest</Head>
              <Head>Company</Head>
              <Head className="justify-between pr-[16px]">Is Primary<Caret c="#888" /></Head>
              <Head>Check In Date</Head>
              <Head>Check Out Date</Head>
              <Head>Primary Phone</Head>
              <div />
              <Cell bg="bg-white" className="justify-center border-r-[#a8a8a8] pr-[3px]"><svg width="4" height="7" viewBox="0 0 4 7"><polygon points="0,0 4,3.5 0,7" fill="#666" /></svg></Cell>
              <Cell bg="bg-[#f9f9f9]">Attendee</Cell>
              <Cell bg="bg-[#e3eff9]">Clover, Sophia S</Cell>
              <Cell bg="bg-[#e3eff9]" />
              <Cell bg="bg-[#e3eff9]" className="justify-center"><div className="flex h-[13px] w-[13px] items-center justify-center border border-[#9a9a9a] bg-white"><svg width="9" height="8" viewBox="0 0 9 8"><path d="M1 4L3.5 6.5L8 1" fill="none" stroke="#333" strokeWidth="1.5" /></svg></div></Cell>
              <Cell bg="bg-[#e3eff9]">Mon Jul 05 2021</Cell>
              <Cell bg="bg-[#e3eff9]">Fri Jul 09 2021</Cell>
              <Cell bg="bg-[#e3eff9]" />
              <div className="row-span-2 flex flex-col items-center bg-[#f0f0f0] pt-[5px]">
                <Chev up c="#6f6f6f" />
                <div className="mt-[5px] h-[2px] w-[9px] bg-[#4d9a3a]" />
                <div className="mt-[11px]"><Chev c="#6f6f6f" /></div>
              </div>
              <Cell bg="bg-white" className="border-r-[#a8a8a8] border-b-[#a8a8a8]" />
              <Cell bg="bg-[#f9f9f9]" className="border-b-[#a8a8a8]">Attendee</Cell>
              <Cell bg="bg-[#f9f9f9]" className="border-b-[#a8a8a8]">Juniper, Emma D</Cell>
              <Cell bg="bg-[#f9f9f9]" className="border-b-[#a8a8a8]" />
              <Cell bg="bg-[#f9f9f9]" className="justify-center border-b-[#a8a8a8]"><div className="h-[13px] w-[13px] border border-[#9a9a9a] bg-white" /></Cell>
              <Cell bg="bg-[#f9f9f9]" className="border-b-[#a8a8a8]">Mon Jul 05 2021</Cell>
              <Cell bg="bg-[#f9f9f9]" className="border-b-[#a8a8a8]">Fri Jul 09 2021</Cell>
              <Cell bg="bg-[#f9f9f9]" className="border-b-[#a8a8a8]" />
            </div>
            <div className="mt-[3px] ml-[179px] flex h-[24px] w-[236px] items-center justify-end border border-[#ababab] pr-[3px]">2</div>
          </div>
        </div>
        <div className="mt-[5px] flex min-h-0 flex-1 items-end justify-end bg-[#0070c4] pr-[2px] pb-[2px]"><Grip /></div>
      </div>
    </div>
  );
}

function Grip() {
  return (
    <svg width="9" height="9" viewBox="0 0 9 9" className="shrink-0">
      {[[6, 0], [3, 3], [6, 3], [0, 6], [3, 6], [6, 6]].map(([x, y], i) => <rect key={i} x={x} y={y} width="2" height="2" fill="#cfe3f5" />)}
    </svg>
  );
}
